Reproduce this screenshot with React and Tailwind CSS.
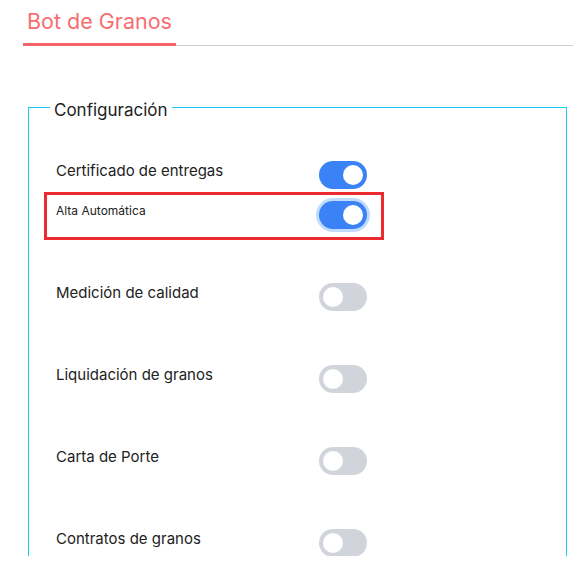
import React from "react";

function Toggle({ on, focus }) {
  return (
    <div
      className={
        "relative h-7 w-12 shrink-0 rounded-full " +
        (on ? "bg-[#3b82f6] " : "bg-[#d1d5db] ") +
        (focus ? "ring-[3px] ring-[#bfdbfe]" : "")
      }
    >
      <div
        className={
          "absolute top-1 h-5 w-5 rounded-full bg-white " +
          (on ? "right-1" : "left-1")
        }
      />
    </div>
  );
}

function Row({ label, on, className = "" }) {
  return (
    <div className={"flex items-start pl-[9px] " + className}>
      <div className="w-[263px] text-[15px] leading-[20px] text-[#222]">{label}</div>
      <Toggle on={on} />
    </div>
  );
}

export default function App() {
  return (
    <div
      className="h-[556px] overflow-hidden bg-white"
      style={{ fontFamily: "Inter, 'Noto Sans', sans-serif" }}
    >
      <div className="ml-[23px] flex items-end pt-[7px]">
        <div className="border-b-[3px] border-[#f4646a] px-[4px] pb-[7px] text-[21.5px] leading-[29px] text-[#f76d6f]">
          Bot de Granos
        </div>
        <div className="flex-1 border-b border-[#d0d0d0]" />
      </div>

      <fieldset className="ml-[28px] mt-[46px] w-[539px] border border-[#1ccbf2] pl-[15px] pt-[39px]">
        <legend className="ml-[6px] px-1 pt-[6px] text-[17px] leading-[24px] text-[#222]">
          Configuración
        </legend>
        <div className="flex flex-col">
          <Row label="Certificado de entregas" on className="border-[3px] border-transparent -mt-[3px] w-[340px] h-[34px]" />
          <div className="flex h-[48px] w-[340px] items-start border-[3px] border-[#ec2a2f] pl-[9px] pt-[6px]">
            <div className="w-[263px] pt-[2px] text-[12px] leading-[16px] text-[#222]">
              Alta Automática
            </div>
            <Toggle on focus />
          </div>
          <Row label="Medición de calidad" className="ml-[3px] mt-[43px]" />
          <Row label="Liquidación de granos" className="ml-[3px] mt-[54px]" />
          <Row label="Carta de Porte" className="ml-[3px] mt-[54px]" />
          <Row label="Contratos de granos" className="ml-[3px] mt-[54px]" />
          <div className="h-10" />
        </div>
      </fieldset>
    </div>
  );
}
